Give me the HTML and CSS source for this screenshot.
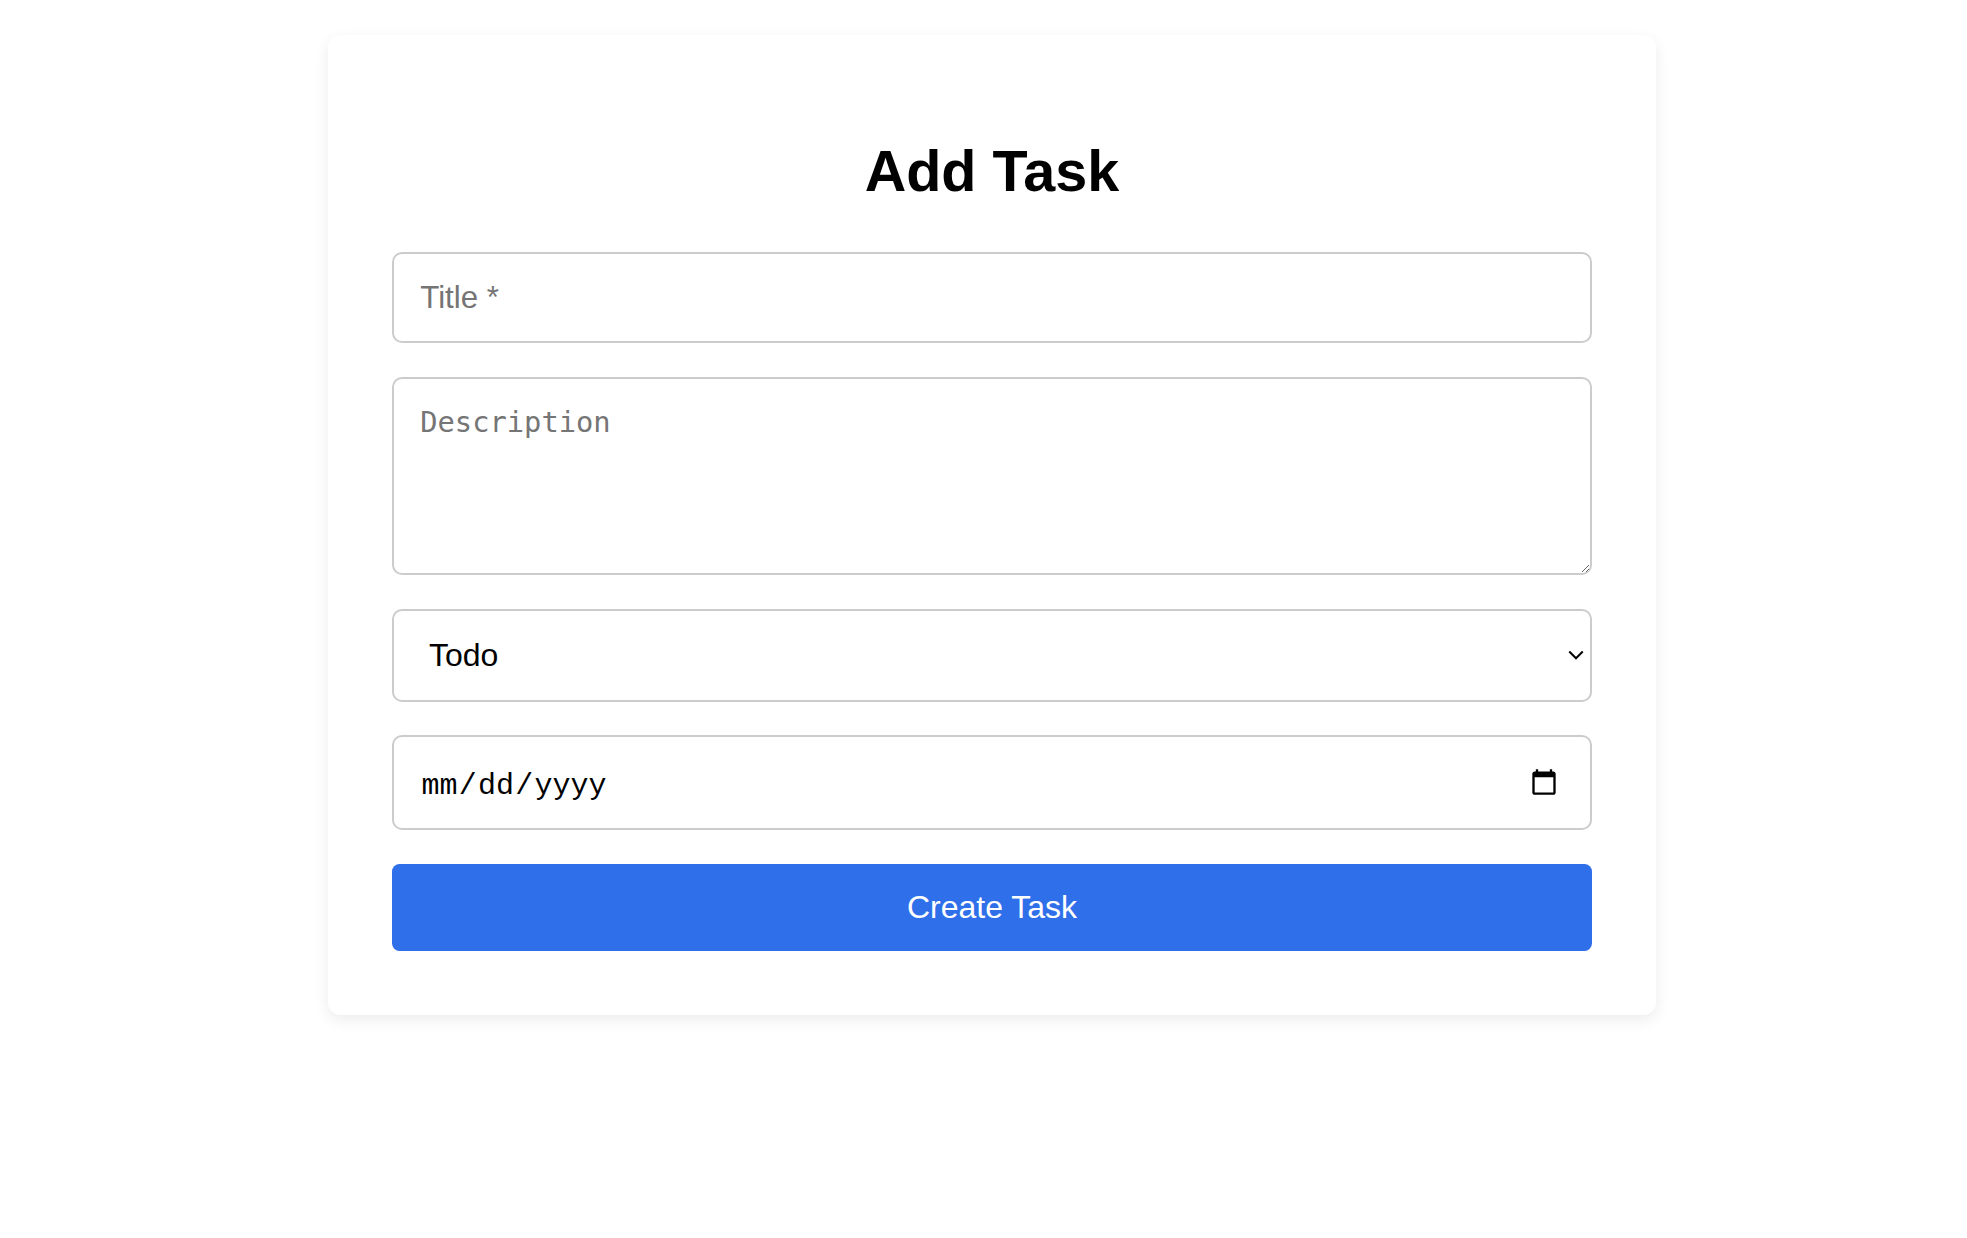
FILE: index.html
```html
<!DOCTYPE html>
<html lang="en">
<head>
<meta charset="utf-8">
<title>Add Task</title>
<link rel="stylesheet" href="styles.css">
</head>
<body>
<div class="page">
  <div class="card">
    <h1 class="heading">Add Task</h1>
    <form class="form">
      <input class="field field-title" type="text" placeholder="Title *">
      <textarea class="field field-desc" placeholder="Description"></textarea>
      <div class="select-wrap">
        <select class="field field-status">
          <option>Todo</option>
          <option>In Progress</option>
          <option>Done</option>
        </select>
        <svg class="chevron" viewBox="0 0 12.8 8" width="12.8" height="8" aria-hidden="true">
          <path d="M1 1.2 L6.4 6.6 L11.8 1.2" fill="none" stroke="#000" stroke-width="1.6"/>
        </svg>
      </div>
      <input class="field field-date" type="date">
      <button class="submit" type="button">Create Task</button>
    </form>
  </div>
</div>
</body>
</html>
```

FILE: styles.css
```css
body {
  margin: 0;
  zoom: 1.25;
  background: #fff;
  font-family: "Liberation Sans", Arial, sans-serif;
  color: #000;
}

.page {
  display: flex;
  justify-content: center;
  padding: 28px 0 40px 13.6px;
}

.card {
  width: 1062.4px;
  box-sizing: border-box;
  padding: 51.2px;
  background: #fff;
  border-radius: 10px;
  box-shadow: 0 4px 12px rgba(0, 0, 0, 0.08);
}

.heading {
  margin: 31px 0 38.6px;
  font-size: 46px;
  line-height: 1.15;
  font-weight: bold;
  text-align: center;
}

.form {
  display: flex;
  flex-direction: column;
  gap: 27px;
}

.field {
  box-sizing: border-box;
  width: 100%;
  margin: 0;
  border: 1.6px solid #ccc;
  border-radius: 8px;
  background: #fff;
  color: #000;
  padding: 0 21px;
  font-family: "Liberation Sans", Arial, sans-serif;
  font-size: 25px;
}

.field::placeholder {
  color: #757575;
}

.field-title {
  height: 72.8px;
}

.field-desc {
  display: block;
  height: 158.4px;
  padding: 21px;
  font-family: "DejaVu Sans Mono", monospace;
  font-size: 23px;
  resize: vertical;
}

.select-wrap {
  position: relative;
}

.field-status {
  display: block;
  height: 74.4px;
  padding-left: 28px;
  padding-right: 30px;
  font-size: 25.6px;
  -webkit-appearance: none;
  appearance: none;
}

.chevron {
  position: absolute;
  right: 6.4px;
  top: 50%;
  margin-top: -4px;
  pointer-events: none;
}

.field-date {
  height: 76px;
  padding-right: 23px;
  font-family: "Liberation Mono", monospace;
  font-size: 24px;
}

.field-date::-webkit-datetime-edit {
  padding-top: 4.8px;
}

.submit {
  height: 69.6px;
  border: none;
  border-radius: 6px;
  background: #2f6fea;
  color: #fff;
  font-family: "Liberation Sans", Arial, sans-serif;
  font-size: 25.6px;
  cursor: pointer;
}
```
